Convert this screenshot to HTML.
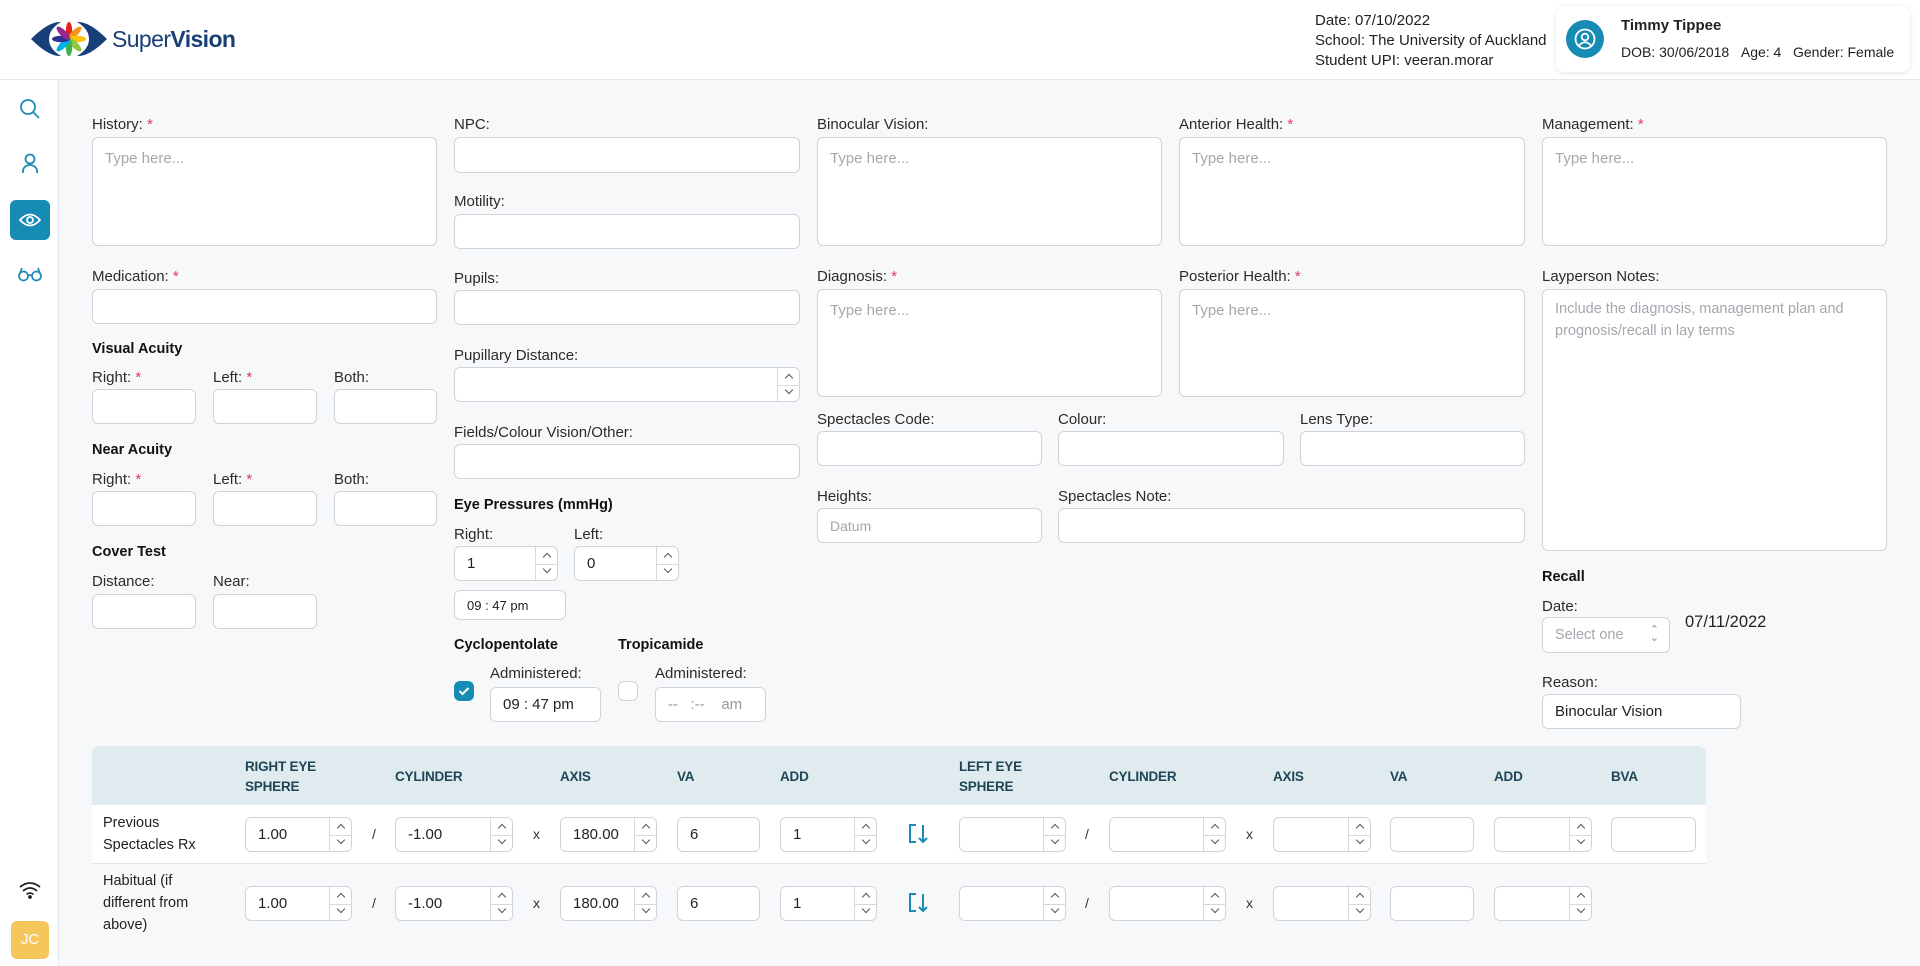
<!DOCTYPE html>
<html><head><meta charset="utf-8"><style>
*{box-sizing:border-box;margin:0;padding:0}
body{width:1920px;height:966px;overflow:hidden;background:#f7f8fa;font-family:"Liberation Sans",sans-serif;color:#222;position:relative}
.hdr{position:absolute;left:0;top:0;width:1920px;height:80px;background:#fff;border-bottom:1px solid #e3e6ea}
.side{position:absolute;left:0;top:80px;width:59px;height:886px;background:#fff;border-right:1px solid #e3e6ea}
.a{position:absolute}
.l{position:absolute;font-size:15px;color:#2b2b2b;white-space:nowrap}
.l em{color:#e0365e;font-style:normal}
.h{position:absolute;font-size:14.5px;font-weight:bold;color:#111;white-space:nowrap}
.in{position:absolute;background:#fff;border:1px solid #cfd4da;border-radius:6px;font-size:15px;color:#222;padding-left:12px;display:flex;align-items:center;white-space:nowrap}
.ta{align-items:flex-start;padding-top:12px}
.ph{color:#a3a8ae}
.ar{position:absolute;right:0;top:0;bottom:0;width:22px;border-left:1px solid #d5d9de}
.ar::before{content:"";position:absolute;left:0;right:0;top:50%;border-top:1px solid #d5d9de}
.ar i{position:absolute;left:8px;width:6px;height:6px;border-top:1.3px solid #555;border-left:1.3px solid #555}
.ar i.u{top:27%;margin-top:-2px;transform:rotate(45deg)}
.ar i.d{top:73%;margin-top:-5px;transform:rotate(225deg)}
.th{position:absolute;font-size:13.5px;font-weight:bold;color:#1e4656;line-height:20px;letter-spacing:-0.2px}
.tl{position:absolute;font-size:14.5px;color:#222;line-height:22px}
.sym{position:absolute;font-size:14px;color:#333}
</style></head><body>
<div class="hdr">
 <svg class="a" style="left:29px;top:19px" width="80" height="40" viewBox="0 0 80 40">
  <path d="M2 20 Q20 2 32 3 Q20 10 20 20 Q20 30 32 37 Q20 38 2 20Z" fill="#173f78"/>
  <path d="M78 20 Q60 2 48 3 Q60 10 60 20 Q60 30 48 37 Q60 38 78 20Z" fill="#173f78"/>
  <g transform="translate(40 20)">
   <ellipse rx="3.2" ry="9" cy="-8" fill="#e2231a"/>
   <ellipse rx="3.2" ry="9" cy="-8" fill="#f7941d" transform="rotate(45)"/>
   <ellipse rx="3.2" ry="9" cy="-8" fill="#ffc20e" transform="rotate(90)"/>
   <ellipse rx="3.2" ry="9" cy="-8" fill="#8dc63f" transform="rotate(135)"/>
   <ellipse rx="3.2" ry="9" cy="-8" fill="#39b54a" transform="rotate(180)"/>
   <ellipse rx="3.2" ry="9" cy="-8" fill="#00aeef" transform="rotate(225)"/>
   <ellipse rx="3.2" ry="9" cy="-8" fill="#2e3192" transform="rotate(270)"/>
   <ellipse rx="3.2" ry="9" cy="-8" fill="#92278f" transform="rotate(315)"/>
  </g>
 </svg>
 <div class="a" style="left:112px;top:26px;font-size:23px;color:#1b3f75;letter-spacing:-0.6px"><span style="font-weight:300">Super</span><b>Vision</b></div>
 <div class="a" style="left:1315px;top:11px;font-size:15px;line-height:20px;color:#222">Date: 07/10/2022<br>School: The University of Auckland<br>Student UPI: veeran.morar</div>
 <div class="a" style="left:1556px;top:6px;width:354px;height:66px;background:#fff;border-radius:8px;box-shadow:0 1px 5px rgba(0,0,0,.12)">
  <div class="a" style="left:10px;top:14px;width:38px;height:38px;border-radius:50%;background:#168bb3">
   <svg class="a" style="left:8px;top:8px" width="22" height="22" viewBox="0 0 22 22" fill="none" stroke="#fff" stroke-width="1.8"><circle cx="11" cy="11" r="9.5"/><circle cx="11" cy="9" r="3.3"/><path d="M5 17.5 Q11 11 17 17.5"/></svg>
  </div>
  <div class="a" style="left:65px;top:11px;font-size:15px;font-weight:bold;white-space:nowrap">Timmy Tippee</div>
  <div class="a" style="left:65px;top:38px;font-size:14px;white-space:nowrap">DOB: 30/06/2018&nbsp;&nbsp;&nbsp;Age: 4&nbsp;&nbsp;&nbsp;Gender: Female</div>
 </div>
</div>
<div class="side">
 <svg class="a" style="left:18px;top:17px" width="24" height="24" viewBox="0 0 24 24" fill="none" stroke="#1a8bb3" stroke-width="1.8"><circle cx="10" cy="10" r="7"/><path d="M15 15l6 6"/></svg>
 <svg class="a" style="left:20px;top:72px" width="20" height="24" viewBox="0 0 20 24" fill="none" stroke="#1a8bb3" stroke-width="1.8"><circle cx="10" cy="7" r="4.5"/><path d="M3 21v-2a7 6 0 0 1 14 0v2"/></svg>
 <div class="a" style="left:10px;top:120px;width:40px;height:40px;border-radius:6px;background:#168bb3">
  <svg class="a" style="left:9px;top:11px" width="22" height="18" viewBox="0 0 22 18" fill="none" stroke="#fff" stroke-width="1.8"><path d="M1 9 Q11 -2 21 9 Q11 20 1 9Z"/><circle cx="11" cy="9" r="3"/></svg>
 </div>
 <svg class="a" style="left:17px;top:186px" width="26" height="16" viewBox="0 0 26 16" fill="none" stroke="#1a8bb3" stroke-width="1.7"><circle cx="6.5" cy="10" r="4.5"/><circle cx="19.5" cy="10" r="4.5"/><path d="M11 10q2-2 4 0M2 10L5 2M24 10L21 2"/></svg>
 <svg class="a" style="left:19px;top:801px" width="22" height="18" viewBox="0 0 22 18" fill="none" stroke="#222" stroke-width="1.8"><path d="M1 6q10-8 20 0M4 10q7-6 14 0M7.5 13.5q3.5-3 7 0"/><circle cx="11" cy="16" r="1" fill="#222"/></svg>
 <div class="a" style="left:11px;top:841px;width:38px;height:38px;border-radius:6px;background:#f5c75a;color:#fff;font-size:15px;text-align:center;line-height:38px">JC</div>
</div>

<!-- Col1 -->
<div class="l" style="left:92px;top:116px">History: <em>*</em></div>
<div class="in ta" style="left:92px;top:137px;width:345px;height:109px"><span class="ph">Type here...</span></div>
<div class="l" style="left:92px;top:268px">Medication: <em>*</em></div>
<div class="in" style="left:92px;top:289px;width:345px;height:35px"></div>
<div class="h" style="left:92px;top:341px">Visual Acuity</div>
<div class="l" style="left:92px;top:369px">Right: <em>*</em></div>
<div class="l" style="left:213px;top:369px">Left: <em>*</em></div>
<div class="l" style="left:334px;top:369px">Both:</div>
<div class="in" style="left:92px;top:389px;width:104px;height:35px"></div>
<div class="in" style="left:213px;top:389px;width:104px;height:35px"></div>
<div class="in" style="left:334px;top:389px;width:103px;height:35px"></div>
<div class="h" style="left:92px;top:442px">Near Acuity</div>
<div class="l" style="left:92px;top:471px">Right: <em>*</em></div>
<div class="l" style="left:213px;top:471px">Left: <em>*</em></div>
<div class="l" style="left:334px;top:471px">Both:</div>
<div class="in" style="left:92px;top:491px;width:104px;height:35px"></div>
<div class="in" style="left:213px;top:491px;width:104px;height:35px"></div>
<div class="in" style="left:334px;top:491px;width:103px;height:35px"></div>
<div class="h" style="left:92px;top:544px">Cover Test</div>
<div class="l" style="left:92px;top:573px">Distance:</div>
<div class="l" style="left:213px;top:573px">Near:</div>
<div class="in" style="left:92px;top:594px;width:104px;height:35px"></div>
<div class="in" style="left:213px;top:594px;width:104px;height:35px"></div>

<!-- Col2 -->
<div class="l" style="left:454px;top:116px">NPC:</div>
<div class="in" style="left:454px;top:137px;width:346px;height:36px"></div>
<div class="l" style="left:454px;top:193px">Motility:</div>
<div class="in" style="left:454px;top:214px;width:346px;height:35px"></div>
<div class="l" style="left:454px;top:270px">Pupils:</div>
<div class="in" style="left:454px;top:290px;width:346px;height:35px"></div>
<div class="l" style="left:454px;top:347px">Pupillary Distance:</div>
<div class="in" style="left:454px;top:367px;width:346px;height:35px"><div class="ar"><i class="u"></i><i class="d"></i></div></div>
<div class="l" style="left:454px;top:424px">Fields/Colour Vision/Other:</div>
<div class="in" style="left:454px;top:444px;width:346px;height:35px"></div>
<div class="h" style="left:454px;top:497px">Eye Pressures (mmHg)</div>
<div class="l" style="left:454px;top:526px">Right:</div>
<div class="l" style="left:574px;top:526px">Left:</div>
<div class="in" style="left:454px;top:546px;width:104px;height:35px">1<div class="ar"><i class="u"></i><i class="d"></i></div></div>
<div class="in" style="left:574px;top:546px;width:105px;height:35px">0<div class="ar"><i class="u"></i><i class="d"></i></div></div>
<div class="in" style="left:454px;top:590px;width:112px;height:30px;font-size:13px">09 : 47 pm</div>
<div class="h" style="left:454px;top:637px">Cyclopentolate</div>
<div class="h" style="left:618px;top:637px">Tropicamide</div>
<div class="l" style="left:490px;top:665px">Administered:</div>
<div class="l" style="left:655px;top:665px">Administered:</div>
<div class="a" style="left:454px;top:681px;width:20px;height:20px;border-radius:6px;background:#168bb3">
 <svg class="a" style="left:4px;top:5px" width="12" height="10" viewBox="0 0 12 10" fill="none" stroke="#fff" stroke-width="2"><path d="M1.5 5l3 3 6-6"/></svg></div>
<div class="a" style="left:618px;top:681px;width:20px;height:20px;border-radius:6px;background:#fff;border:1px solid #cfd4da"></div>
<div class="in" style="left:490px;top:687px;width:111px;height:35px;font-size:15px">09 : 47 pm</div>
<div class="in" style="left:655px;top:687px;width:111px;height:35px;color:#999">--&nbsp;&nbsp;&nbsp;:--&nbsp;&nbsp;&nbsp;&nbsp;am</div>

<!-- Col3 -->
<div class="l" style="left:817px;top:116px">Binocular Vision:</div>
<div class="in ta" style="left:817px;top:137px;width:345px;height:109px"><span class="ph">Type here...</span></div>
<div class="l" style="left:817px;top:268px">Diagnosis: <em>*</em></div>
<div class="in ta" style="left:817px;top:289px;width:345px;height:108px"><span class="ph">Type here...</span></div>
<div class="l" style="left:817px;top:411px">Spectacles Code:</div>
<div class="l" style="left:1058px;top:411px">Colour:</div>
<div class="l" style="left:1300px;top:411px">Lens Type:</div>
<div class="in" style="left:817px;top:431px;width:225px;height:35px"></div>
<div class="in" style="left:1058px;top:431px;width:226px;height:35px"></div>
<div class="in" style="left:1300px;top:431px;width:225px;height:35px"></div>
<div class="l" style="left:817px;top:488px">Heights:</div>
<div class="l" style="left:1058px;top:488px">Spectacles Note:</div>
<div class="in" style="left:817px;top:508px;width:225px;height:35px"><span class="ph" style="font-size:14px">Datum</span></div>
<div class="in" style="left:1058px;top:508px;width:467px;height:35px"></div>

<!-- Col4 -->
<div class="l" style="left:1179px;top:116px">Anterior Health: <em>*</em></div>
<div class="in ta" style="left:1179px;top:137px;width:346px;height:109px"><span class="ph">Type here...</span></div>
<div class="l" style="left:1179px;top:268px">Posterior Health: <em>*</em></div>
<div class="in ta" style="left:1179px;top:289px;width:346px;height:108px"><span class="ph">Type here...</span></div>

<!-- Col5 -->
<div class="l" style="left:1542px;top:116px">Management: <em>*</em></div>
<div class="in ta" style="left:1542px;top:137px;width:345px;height:109px"><span class="ph">Type here...</span></div>
<div class="l" style="left:1542px;top:268px">Layperson Notes:</div>
<div class="in ta" style="left:1542px;top:289px;width:345px;height:262px;white-space:normal;line-height:22px;padding-top:8px;padding-right:12px"><span class="ph" style="font-size:14.5px">Include the diagnosis, management plan and prognosis/recall in lay terms</span></div>
<div class="h" style="left:1542px;top:569px">Recall</div>
<div class="l" style="left:1542px;top:598px">Date:</div>
<div class="in" style="left:1542px;top:617px;width:128px;height:36px"><span class="ph" style="font-size:14.5px">Select one</span><span class="a" style="right:10px;top:8px;font-size:11px;color:#888;line-height:8px">&#8963;<br>&#8964;</span></div>
<div class="a" style="left:1685px;top:613px;font-size:16.5px">07/11/2022</div>
<div class="l" style="left:1542px;top:674px">Reason:</div>
<div class="in" style="left:1542px;top:694px;width:199px;height:35px">Binocular Vision</div>

<!-- Table -->
<div class="a" style="left:92px;top:746px;width:1614px;height:187px;background:#fff;border-radius:8px 8px 0 0;overflow:hidden">
 <div class="a" style="left:0;top:0;width:1614px;height:59px;background:#e0ebef"></div>
 <div class="a" style="left:0;top:117px;width:1614px;height:70px;background:#f7f8fa;border-top:1px solid #e1e4e8"></div>
</div>
<div class="th" style="left:245px;top:757px">RIGHT EYE<br>SPHERE</div>
<div class="th" style="left:395px;top:767px">CYLINDER</div>
<div class="th" style="left:560px;top:767px">AXIS</div>
<div class="th" style="left:677px;top:767px">VA</div>
<div class="th" style="left:780px;top:767px">ADD</div>
<div class="th" style="left:959px;top:757px">LEFT EYE<br>SPHERE</div>
<div class="th" style="left:1109px;top:767px">CYLINDER</div>
<div class="th" style="left:1273px;top:767px">AXIS</div>
<div class="th" style="left:1390px;top:767px">VA</div>
<div class="th" style="left:1494px;top:767px">ADD</div>
<div class="th" style="left:1611px;top:767px">BVA</div>

<div class="tl" style="left:103px;top:812px">Previous<br>Spectacles Rx</div>
<div class="tl" style="left:103px;top:870px">Habitual (if<br>different from<br>above)</div>

<!-- row1 -->
<div class="in" style="left:245px;top:817px;width:107px;height:35px">1.00<div class="ar"><i class="u"></i><i class="d"></i></div></div>
<div class="sym" style="left:372px;top:826px">/</div>
<div class="in" style="left:395px;top:817px;width:118px;height:35px">-1.00<div class="ar"><i class="u"></i><i class="d"></i></div></div>
<div class="sym" style="left:533px;top:826px">x</div>
<div class="in" style="left:560px;top:817px;width:97px;height:35px">180.00<div class="ar"><i class="u"></i><i class="d"></i></div></div>
<div class="in" style="left:677px;top:817px;width:83px;height:35px">6</div>
<div class="in" style="left:780px;top:817px;width:97px;height:35px">1<div class="ar"><i class="u"></i><i class="d"></i></div></div>
<svg class="a" style="left:907px;top:823px" width="24" height="22" viewBox="0 0 24 22" fill="none" stroke="#1a8bb3" stroke-width="2"><path d="M9 2H3v17h6M16 2v17M12 15l4 4 4-4"/></svg>
<div class="in" style="left:959px;top:817px;width:107px;height:35px"><div class="ar"><i class="u"></i><i class="d"></i></div></div>
<div class="sym" style="left:1085px;top:826px">/</div>
<div class="in" style="left:1109px;top:817px;width:117px;height:35px"><div class="ar"><i class="u"></i><i class="d"></i></div></div>
<div class="sym" style="left:1246px;top:826px">x</div>
<div class="in" style="left:1273px;top:817px;width:98px;height:35px"><div class="ar"><i class="u"></i><i class="d"></i></div></div>
<div class="in" style="left:1390px;top:817px;width:84px;height:35px"></div>
<div class="in" style="left:1494px;top:817px;width:98px;height:35px"><div class="ar"><i class="u"></i><i class="d"></i></div></div>
<div class="in" style="left:1611px;top:817px;width:85px;height:35px"></div>

<!-- row2 -->
<div class="in" style="left:245px;top:886px;width:107px;height:35px">1.00<div class="ar"><i class="u"></i><i class="d"></i></div></div>
<div class="sym" style="left:372px;top:895px">/</div>
<div class="in" style="left:395px;top:886px;width:118px;height:35px">-1.00<div class="ar"><i class="u"></i><i class="d"></i></div></div>
<div class="sym" style="left:533px;top:895px">x</div>
<div class="in" style="left:560px;top:886px;width:97px;height:35px">180.00<div class="ar"><i class="u"></i><i class="d"></i></div></div>
<div class="in" style="left:677px;top:886px;width:83px;height:35px">6</div>
<div class="in" style="left:780px;top:886px;width:97px;height:35px">1<div class="ar"><i class="u"></i><i class="d"></i></div></div>
<svg class="a" style="left:907px;top:892px" width="24" height="22" viewBox="0 0 24 22" fill="none" stroke="#1a8bb3" stroke-width="2"><path d="M9 2H3v17h6M16 2v17M12 15l4 4 4-4"/></svg>
<div class="in" style="left:959px;top:886px;width:107px;height:35px"><div class="ar"><i class="u"></i><i class="d"></i></div></div>
<div class="sym" style="left:1085px;top:895px">/</div>
<div class="in" style="left:1109px;top:886px;width:117px;height:35px"><div class="ar"><i class="u"></i><i class="d"></i></div></div>
<div class="sym" style="left:1246px;top:895px">x</div>
<div class="in" style="left:1273px;top:886px;width:98px;height:35px"><div class="ar"><i class="u"></i><i class="d"></i></div></div>
<div class="in" style="left:1390px;top:886px;width:84px;height:35px"></div>
<div class="in" style="left:1494px;top:886px;width:98px;height:35px"><div class="ar"><i class="u"></i><i class="d"></i></div></div>
<div class="a" style="left:60px;top:933px;width:1860px;height:33px;background:#f7f8fa"></div>
</body></html>
